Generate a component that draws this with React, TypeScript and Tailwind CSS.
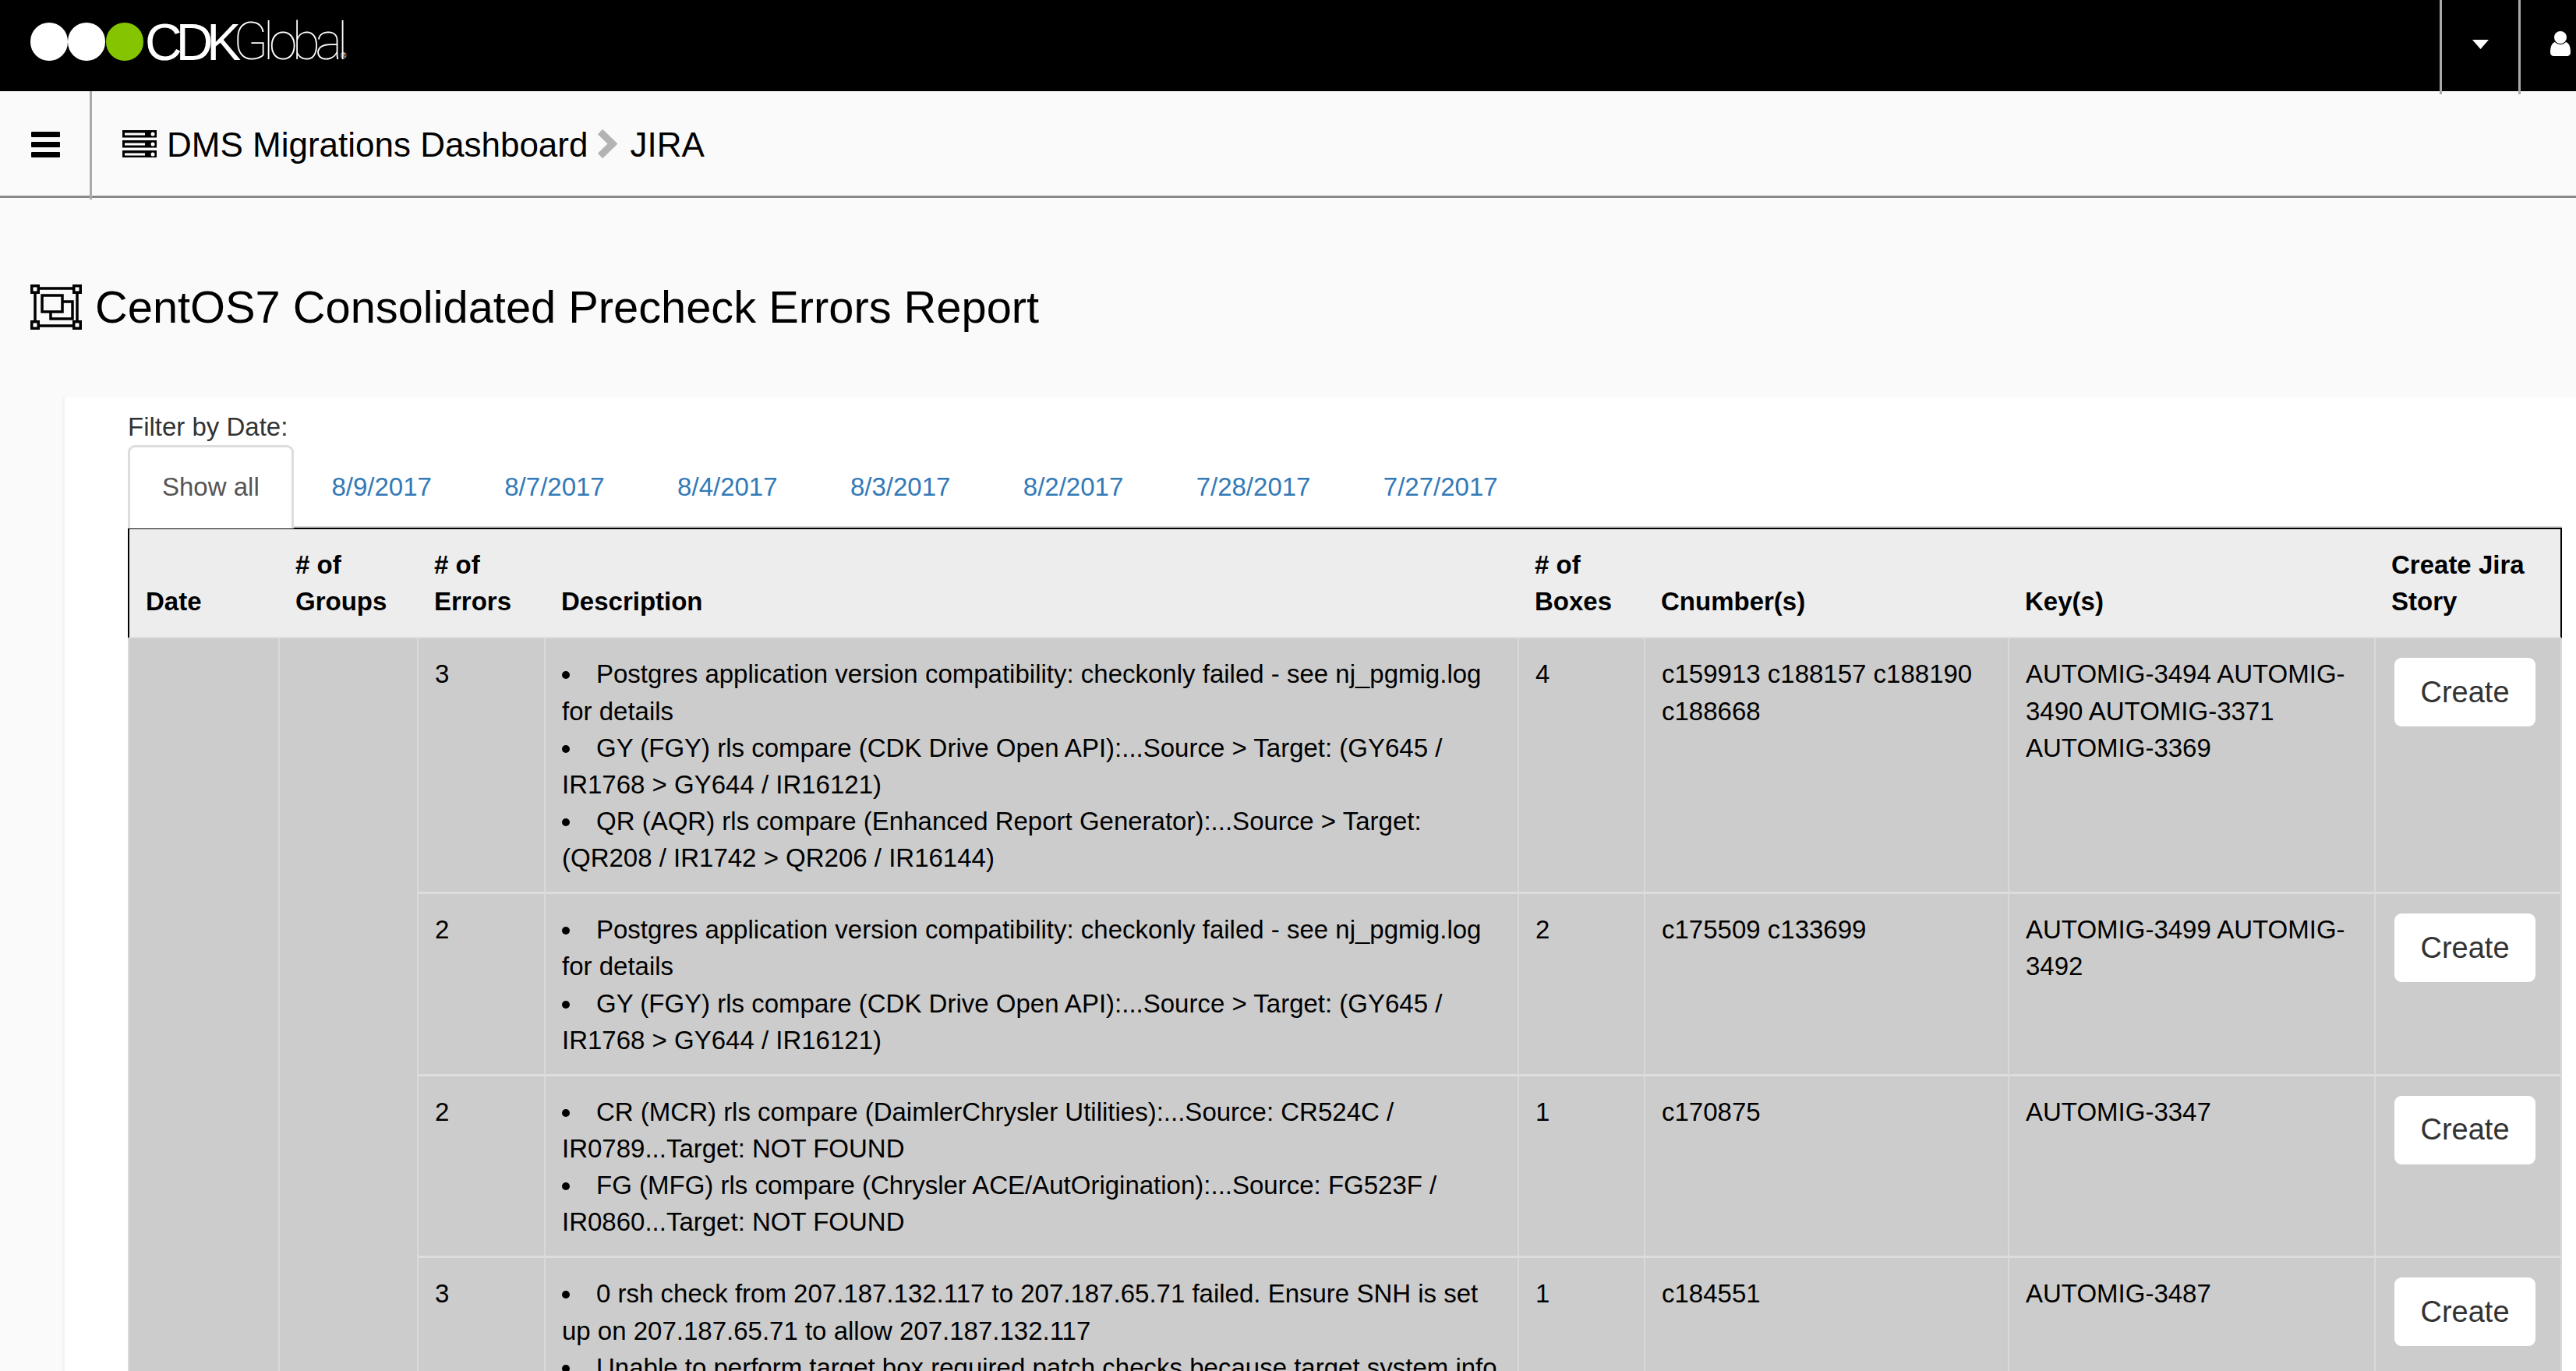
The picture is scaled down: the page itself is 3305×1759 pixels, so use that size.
const rows = [
  {
    errors: "3",
    items: [
      "Postgres application version compatibility: checkonly failed - see nj_pgmig.log for details",
      "GY (FGY) rls compare (CDK Drive Open API):...Source > Target: (GY645 / IR1768 > GY644 / IR16121)",
      "QR (AQR) rls compare (Enhanced Report Generator):...Source > Target: (QR208 / IR1742 > QR206 / IR16144)",
    ],
    boxes: "4",
    cnumbers: "c159913 c188157 c188190 c188668",
    keys: "AUTOMIG-3494 AUTOMIG-3490 AUTOMIG-3371 AUTOMIG-3369",
  },
  {
    errors: "2",
    items: [
      "Postgres application version compatibility: checkonly failed - see nj_pgmig.log for details",
      "GY (FGY) rls compare (CDK Drive Open API):...Source > Target: (GY645 / IR1768 > GY644 / IR16121)",
    ],
    boxes: "2",
    cnumbers: "c175509 c133699",
    keys: "AUTOMIG-3499 AUTOMIG-3492",
  },
  {
    errors: "2",
    items: [
      "CR (MCR) rls compare (DaimlerChrysler Utilities):...Source: CR524C / IR0789...Target: NOT FOUND",
      "FG (MFG) rls compare (Chrysler ACE/AutOrigination):...Source: FG523F / IR0860...Target: NOT FOUND",
    ],
    boxes: "1",
    cnumbers: "c170875",
    keys: "AUTOMIG-3347",
  },
  {
    errors: "3",
    items: [
      "0 rsh check from 207.187.132.117 to 207.187.65.71 failed. Ensure SNH is set up on 207.187.65.71 to allow 207.187.132.117",
      "Unable to perform target box required patch checks because target system info is unavailable",
    ],
    boxes: "1",
    cnumbers: "c184551",
    keys: "AUTOMIG-3487",
  },
];

const dates = [
  "8/9/2017",
  "8/7/2017",
  "8/4/2017",
  "8/3/2017",
  "8/2/2017",
  "7/28/2017",
  "7/27/2017",
];

const thClass =
  "border-b-2 border-t-2 border-b-[#dddddd] border-t-black bg-[#ededed] px-[22px] py-[22px] text-left align-bottom font-bold";
const tdClass =
  "border-b-[3px] border-l-2 border-b-[#dddddd] border-l-[#d9d9d9] pb-[20px] pl-[21px] pr-[22px] pt-[22px] align-top";

function Logo() {
  return (
    <div className="flex items-start pl-[39px] pt-[29px]">
      <span className="h-[49px] w-[48px] rounded-full bg-white" />
      <span className="h-[49px] w-[48px] rounded-full bg-white" />
      <span className="ml-[1px] h-[49px] w-[48px] rounded-full bg-[#84c400]" />
      <span className="ml-[2px] flex h-[49px] w-[264px] items-center text-[66px] leading-none text-white">
        <span className="w-[113px] font-['Liberation_Sans',sans-serif] tracking-[-8px]">
          CDK
        </span>
        <span className="w-[138px] font-['Roboto',sans-serif] font-thin tracking-[-6.5px]">
          Global
        </span>
        <span className="mt-[36px] text-[10px]">®</span>
      </span>
    </div>
  );
}

function ServerIcon() {
  return (
    <svg width="44" height="35" viewBox="0 0 44 35" className="shrink-0">
      {[0, 13, 26].map((y) => (
        <g key={y}>
          <rect x="0" y={y} width="44" height="9.5" fill="#000" />
          <rect x="3" y={y + 3.5} width="26" height="3" fill="#fff" />
          <circle cx="39" cy={y + 5} r="2.5" fill="#fff" />
        </g>
      ))}
    </svg>
  );
}

function SelectionIcon() {
  return (
    <svg width="66" height="58" viewBox="0 0 66 58" fill="none" stroke="#000" strokeWidth="3.5" className="shrink-0">
      <path d="M6 10v38M60 10v38M11 5h44M11 53h44" />
      <rect x="1.75" y="1.75" width="8.5" height="8.5" fill="#fff" />
      <rect x="55.75" y="1.75" width="8.5" height="8.5" fill="#fff" />
      <rect x="1.75" y="47.75" width="8.5" height="8.5" fill="#fff" />
      <rect x="55.75" y="47.75" width="8.5" height="8.5" fill="#fff" />
      <rect x="15" y="14" width="26" height="21" />
      <path d="M41 22h13v22H26v-9" />
    </svg>
  );
}

export default function App() {
  return (
    <div className="h-[1759px] w-[3305px] overflow-hidden bg-[#fafafa] font-['Liberation_Sans',Arial,sans-serif] text-[33px] leading-[47.14px] text-black">
      <header className="flex h-[117px] items-start bg-black">
        <Logo />
        <div className="relative z-10 ml-auto flex h-[121px] w-[101px] items-start justify-center border-l-[3px] border-[#aaaaaa] pt-[51px]">
          <svg width="21" height="12" viewBox="0 0 21 12">
            <path d="M0 0h21L10.5 12z" fill="#fff" />
          </svg>
        </div>
        <div className="relative z-10 flex h-[121px] w-[74px] items-start justify-end border-l-[3px] border-[#aaaaaa] pr-[7px] pt-[40px]">
          <svg width="26" height="32" viewBox="0 0 26 32">
            <circle cx="13" cy="8" r="8" fill="#fff" />
            <path d="M0 27c0-7 2-12 6-13 2 2 4 3 7 3s5-1 7-3c4 1 6 6 6 13 0 3-2 5-5 5H5c-3 0-5-2-5-5z" fill="#fff" />
          </svg>
        </div>
      </header>

      <nav className="flex h-[137px] items-start border-b-[3px] border-[#888888]">
        <div className="flex h-[139px] w-[118px] shrink-0 flex-col gap-[6px] border-r-[3px] border-[#aaaaaa] pl-[40px] pt-[52px]">
          <span className="h-[7px] w-[37px] rounded-[1px] bg-black" />
          <span className="h-[7px] w-[37px] rounded-[1px] bg-black" />
          <span className="h-[7px] w-[37px] rounded-[1px] bg-black" />
        </div>
        <div className="flex h-[134px] items-center pl-[39px] text-[44px] leading-none">
          <ServerIcon />
          <span className="ml-[13px] pt-[3px]">DMS Migrations Dashboard</span>
          <svg width="27" height="39" viewBox="0 0 27 39" className="ml-[11px]">
            <path d="M5 4l16 15.5L5 35" fill="none" stroke="#b3b3b3" strokeWidth="9" />
          </svg>
          <span className="ml-[16px] pt-[3px]">JIRA</span>
        </div>
      </nav>

      <div className="flex h-[256px] items-start pl-[39px] pt-[111px]">
        <SelectionIcon />
        <h1 className="ml-[17px] text-[57.8px] leading-[58px]">
          CentOS7 Consolidated Precheck Errors Report
        </h1>
      </div>

      <main className="ml-[80px] border-l-[3px] border-[#f3f3f3] bg-white pb-10 pl-[81px] pr-[18px] pt-[14px]">
        <div className="text-[#333333]">Filter by Date:</div>
        <ul className="flex h-[106px] items-start gap-[4px] border-b-2 border-[#dddddd]">
          <li className="h-[107px] rounded-t-[9px] border-[3px] border-b-0 border-[#dddddd] bg-white px-[41px] pt-[27px] text-[#555555]">
            Show all
          </li>
          {dates.map((d) => (
            <li key={d} className="h-[107px] border-[3px] border-transparent px-[41.7px] pt-[27px] text-[#337ab7]">
              {d}
            </li>
          ))}
        </ul>

        <table className="w-[3123px] table-fixed border-separate border-spacing-0">
          <colgroup>
            <col className="w-[193px]" />
            <col className="w-[178px]" />
            <col className="w-[163px]" />
            <col className="w-[1249px]" />
            <col className="w-[162px]" />
            <col className="w-[467px]" />
            <col className="w-[470px]" />
            <col className="w-[241px]" />
          </colgroup>
          <thead>
            <tr>
              <th className={`${thClass} border-l-2 border-l-black pl-[21px]`}>Date</th>
              <th className={thClass}># of Groups</th>
              <th className={thClass}># of Errors</th>
              <th className={thClass}>Description</th>
              <th className={thClass}># of Boxes</th>
              <th className={thClass}>Cnumber(s)</th>
              <th className={thClass}>Key(s)</th>
              <th className={`${thClass} border-r-2 border-r-black`}>Create Jira Story</th>
            </tr>
          </thead>
          <tbody className="bg-[#cccccc]">
            {rows.map((row, i) => (
              <tr key={i}>
                {i === 0 && (
                  <>
                    <td rowSpan={4} className={tdClass} />
                    <td rowSpan={4} className={tdClass} />
                  </>
                )}
                <td className={tdClass}>{row.errors}</td>
                <td className={tdClass}>
                  <ul className="list-inside list-disc">
                    {row.items.map((item) => (
                      <li key={item}>{item}</li>
                    ))}
                  </ul>
                </td>
                <td className={tdClass}>{row.boxes}</td>
                <td className={tdClass}>{row.cnumbers}</td>
                <td className={tdClass}>{row.keys}</td>
                <td className={`${tdClass} border-r-2 border-r-[#d9d9d9]`}>
                  <button className="ml-[3px] mt-[3px] flex h-[88px] w-[181px] items-center justify-center rounded-[9px] bg-white text-[38px] text-[#333333]">
                    Create
                  </button>
                </td>
              </tr>
            ))}
          </tbody>
        </table>
      </main>
    </div>
  );
}
